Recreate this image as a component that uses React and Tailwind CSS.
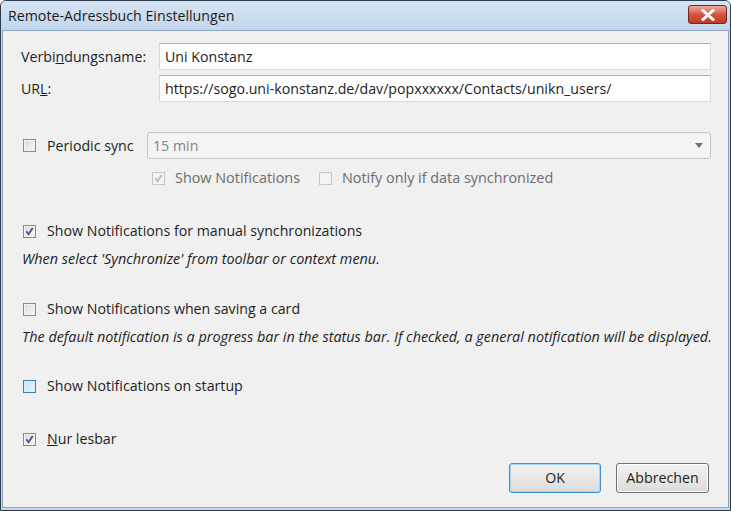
import React from 'react'

const font = { fontFamily: '"Open Sans", "Noto Sans", sans-serif' }

function Check({ checked, disabled, hover }) {
  let box = 'border-[#8a8a8a] bg-gradient-to-br from-[#d8d8d8] to-[#fafafa] shadow-[inset_0_0_0_1px_#f4f4f4]'
  if (hover) box = 'border-[#3c7fb1] bg-gradient-to-br from-[#bfe2f7] to-[#eaf6fd] shadow-[inset_0_0_0_1px_#def0fb]'
  if (disabled) box = 'border-[#c6c6c6] bg-[#f4f4f4]'
  return (
    <span className={`relative inline-block w-[13px] h-[13px] border shrink-0 ${box}`}>
      {checked && (
        <svg viewBox="0 0 11 11" className="absolute inset-0 w-[11px] h-[11px]">
          <path
            d="M2.3 5.3 L4.5 8.2 L8.7 2"
            fill="none"
            stroke={disabled ? '#b8b8b8' : '#3f5494'}
            strokeWidth="1.8"
          />
        </svg>
      )}
    </span>
  )
}

function CheckRow({ label, checked, hover, className = '' }) {
  return (
    <div className={`flex items-center h-5 ml-[2px] ${className}`}>
      <Check checked={checked} hover={hover} />
      <span className="ml-[11px] text-[#1e1e1e]">{label}</span>
    </div>
  )
}

function Field({ label, value }) {
  return (
    <div className="flex items-center h-[27px]">
      <span className="w-[138px] shrink-0 text-[#1e1e1e]">{label}</span>
      <div className="flex-1 h-[27px] bg-white border border-[#d9d9d9] border-t-[#abadb3] flex items-center px-[5px] text-[#1e1e1e]">
        {value}
      </div>
    </div>
  )
}

export default function App() {
  return (
    <div className="w-[731px] h-[511px] bg-[#c5d8ee] border border-[#2e3d4e] rounded-t-[6px] flex flex-col overflow-hidden text-[14.2px]" style={font}>
      {/* Title bar */}
      <div className="h-[29px] shrink-0 flex items-center justify-between pl-[7px] pr-[3px] bg-gradient-to-b from-[#d6e4f3] to-[#c3d6ec]">
        <span className="text-[14.2px] text-[#1a1a1a]">Remote-Adressbuch Einstellungen</span>
        <div className="w-[39px] h-[19px] mb-[2px] rounded-[3px] border border-[#6b2a22] bg-gradient-to-b from-[#e9a99b] via-[#d4553f] to-[#c23a22] flex items-center justify-center">
          <svg viewBox="0 0 14 12" className="w-[14px] h-[12px]">
            <path d="M2 1.5 L12 10.5 M12 1.5 L2 10.5" stroke="#ffffff" strokeWidth="3" strokeLinecap="square" />
          </svg>
        </div>
      </div>

      {/* Content */}
      <div className="flex-1 mx-[1px] mb-[2px] bg-[#f0f0f0] border border-[#8fa6c0] flex flex-col pl-[18px] pr-[17px] pt-[12px]">
        <Field label={<>Verbi<u>n</u>dungsname:</>} value="Uni Konstanz" />
        <div className="mt-[5px]">
          <Field label={<>UR<u>L</u>:</>} value="https://sogo.uni-konstanz.de/dav/popxxxxxx/Contacts/unikn_users/" />
        </div>

        <div className="flex items-center h-[27px] mt-[30px]">
          <div className="w-[124px] shrink-0 flex items-center ml-[2px]">
            <Check />
            <span className="ml-[11px] text-[#1e1e1e]">Periodic sync</span>
          </div>
          <div className="flex-1 h-[27px] rounded-[3px] border border-[#c4c4c4] bg-[#f4f4f4] flex items-center justify-between pl-[5px] pr-[7px] text-[#838383]">
            <span>15 min</span>
            <svg viewBox="0 0 8 5" className="w-[8px] h-[5px]">
              <path d="M0 0 L8 0 L4 5 Z" fill="#707070" />
            </svg>
          </div>
        </div>

        <div className="flex items-center h-5 mt-[9px] pl-[131px] text-[#6d6d6d] text-[14.4px]">
          <Check checked disabled />
          <span className="ml-[10px]">Show Notifications</span>
          <span className="ml-[19px] flex items-center">
            <Check disabled />
          </span>
          <span className="ml-[10px]">Notify only if data synchronized</span>
        </div>

        <CheckRow className="mt-[33px]" checked label="Show Notifications for manual synchronizations" />
        <div className="h-5 mt-2 flex items-center italic text-[#1e1e1e] ml-[1px] text-[14.4px]">
          When select 'Synchronize' from toolbar or context menu.
        </div>

        <CheckRow className="mt-[30px]" label="Show Notifications when saving a card" />
        <div className="h-5 mt-2 flex items-center italic text-[#1e1e1e] ml-[1px] whitespace-nowrap text-[14.4px]">
          The default notification is a progress bar in the status bar. If checked, a general notification will be displayed.
        </div>

        <CheckRow className="mt-[29px]" hover label="Show Notifications on startup" />

        <CheckRow className="mt-[33px]" checked label={<><u>N</u>ur lesbar</>} />

        <div className="flex justify-end gap-[15px] mt-[14px] pr-[2px]">
          <button className="w-[92px] h-[30px] rounded-[3px] border border-[#3c8fd0] bg-gradient-to-b from-[#f2f2f2] to-[#dcdcdc] text-[#1e1e1e] shadow-[inset_0_0_0_1px_#a5d6f5]">
            OK
          </button>
          <button className="w-[93px] h-[30px] rounded-[3px] border border-[#707070] bg-gradient-to-b from-[#f2f2f2] to-[#dcdcdc] text-[#1e1e1e] shadow-[inset_0_0_0_1px_#fcfcfc]">
            Abbrechen
          </button>
        </div>
      </div>
    </div>
  )
}
